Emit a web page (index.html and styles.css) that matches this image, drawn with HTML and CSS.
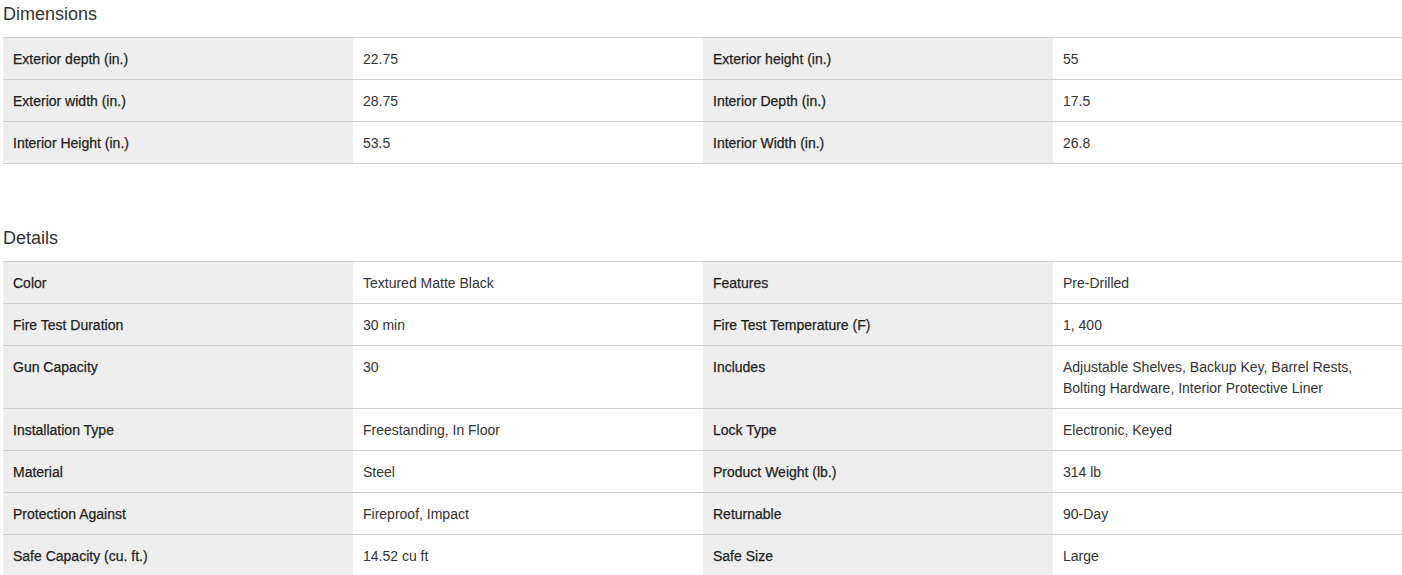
FILE: index.html
```html
<!DOCTYPE html>
<html>
<head>
<meta charset="utf-8">
<link rel="stylesheet" href="styles.css">
</head>
<body>
<div class="specs">
  <section class="spec-section">
    <h2 class="spec-title">Dimensions</h2>
    <table class="spec-table">
      <colgroup><col class="c"><col class="c"><col class="c"><col></colgroup>
      <tr><th>Exterior depth (in.)</th><td>22.75</td><th>Exterior height (in.)</th><td>55</td></tr>
      <tr><th>Exterior width (in.)</th><td>28.75</td><th>Interior Depth (in.)</th><td>17.5</td></tr>
      <tr><th>Interior Height (in.)</th><td>53.5</td><th>Interior Width (in.)</th><td>26.8</td></tr>
    </table>
  </section>
  <section class="spec-section second">
    <h2 class="spec-title">Details</h2>
    <table class="spec-table">
      <colgroup><col class="c"><col class="c"><col class="c"><col></colgroup>
      <tr><th>Color</th><td>Textured Matte Black</td><th>Features</th><td>Pre-Drilled</td></tr>
      <tr><th>Fire Test Duration</th><td>30 min</td><th>Fire Test Temperature (F)</th><td>1, 400</td></tr>
      <tr><th>Gun Capacity</th><td>30</td><th>Includes</th><td>Adjustable Shelves, Backup Key, Barrel Rests,<br>Bolting Hardware, Interior Protective Liner</td></tr>
      <tr><th>Installation Type</th><td>Freestanding, In Floor</td><th>Lock Type</th><td>Electronic, Keyed</td></tr>
      <tr><th>Material</th><td>Steel</td><th>Product Weight (lb.)</th><td>314 lb</td></tr>
      <tr><th>Protection Against</th><td>Fireproof, Impact</td><th>Returnable</th><td>90-Day</td></tr>
      <tr><th>Safe Capacity (cu. ft.)</th><td>14.52 cu ft</td><th>Safe Size</th><td>Large</td></tr>
    </table>
  </section>
</div>
</body>
</html>
```
FILE: styles.css
```css
html, body {
  margin: 0;
  padding: 0;
  background: #fff;
  overflow: hidden;
}
body {
  font-family: "Liberation Sans", Arial, sans-serif;
  color: #333;
}
.specs {
  padding-left: 3px;
}
.spec-section.second {
  margin-top: 60px;
}
.spec-title {
  margin: 0 0 9px;
  font-size: 18px;
  font-weight: normal;
  line-height: 28px;
  color: #333;
}
.spec-table {
  width: 1399px;
  table-layout: fixed;
  border-collapse: collapse;
  border-top: 1px solid #cfcfcf;
  font-size: 14px;
}
.spec-table col.c {
  width: 350px;
}
.spec-table tr {
  border-bottom: 1px solid #cfcfcf;
}
.spec-table th,
.spec-table td {
  padding: 11px 10px 9px;
  line-height: 21px;
  text-align: left;
  vertical-align: top;
}
.spec-table th {
  background: #eeeeee;
  font-weight: normal;
  color: #1f1f1f;
  -webkit-text-stroke: 0.25px #1f1f1f;
}
.spec-table td {
  background: #fff;
  color: #333;
}
```
